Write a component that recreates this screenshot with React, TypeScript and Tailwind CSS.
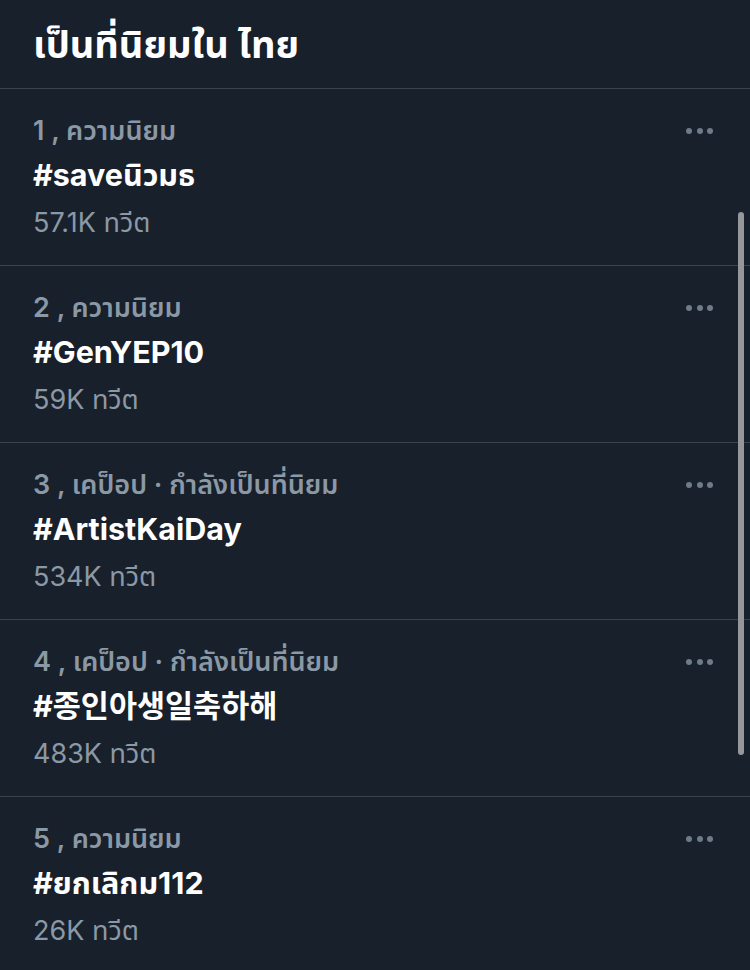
const trends = [
  { rank: 1, context: 'ความนิยม', tag: '#saveนิวมธ', count: '57.1K ทวีต' },
  { rank: 2, context: 'ความนิยม', tag: '#GenYEP10', count: '59K ทวีต' },
  { rank: 3, context: 'เคป็อป · กำลังเป็นที่นิยม', tag: '#ArtistKaiDay', count: '534K ทวีต' },
  { rank: 4, context: 'เคป็อป · กำลังเป็นที่นิยม', tag: '#종인아생일축하해', count: '483K ทวีต' },
  { rank: 5, context: 'ความนิยม', tag: '#ยกเลิกม112', count: '26K ทวีต' },
];

function Dots() {
  return (
    <div className="flex items-center gap-[4.5px] h-[34px]">
      <span className="w-[6px] h-[6px] rounded-full bg-[#6e7b88]" />
      <span className="w-[6px] h-[6px] rounded-full bg-[#6e7b88]" />
      <span className="w-[6px] h-[6px] rounded-full bg-[#6e7b88]" />
    </div>
  );
}

export default function App() {
  return (
    <div
      className="relative w-[750px] h-[970px] overflow-hidden bg-[#18202b]"
      style={{ fontFamily: 'Inter, "Noto Sans", "Noto Sans Thai", "Noto Sans CJK KR", sans-serif' }}
    >
      <div className="h-[89px] flex items-center pl-[33px] border-b border-[#38444d]">
        <h1 className="text-[38px] font-bold text-white leading-none">เป็นที่นิยมใน ไทย</h1>
      </div>

      {trends.map((t) => (
        <div key={t.rank} className="flex pl-[33px] pr-[37px] pt-[25px] pb-[22px] border-b border-[#38444d]">
          <div className="flex-1 flex flex-col">
            <div className="h-[34px] leading-[34px] text-[27px] font-semibold text-[#8b98a5]">
              {t.rank} , {t.context}
            </div>
            <div className="mt-[7px] h-[40px] leading-[40px] text-[30.5px] font-bold text-white">{t.tag}</div>
            <div className="mt-[8px] h-[40px] leading-[40px] text-[27px] text-[#8b98a5]">{t.count}</div>
          </div>
          <Dots />
        </div>
      ))}

      <div className="absolute left-[738px] top-[212px] w-[6px] h-[543px] rounded-full bg-[#96979a]" />
    </div>
  );
}
